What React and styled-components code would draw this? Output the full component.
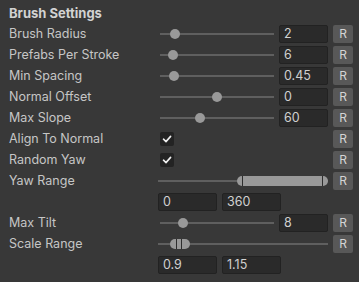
import React from "react";
import styled, { createGlobalStyle } from "styled-components";

const Global = createGlobalStyle`
  html, body { margin: 0; padding: 0; background: #383838; }
  body { font-family: Inter, "Noto Sans", "Liberation Sans", sans-serif; }
`;

const Panel = styled.div`
  width: 359px;
  height: 282px;
  box-sizing: border-box;
  padding: 3px 0 0 9px;
  background: #383838;
  color: #c6c6c6;
  font-size: 12.5px;
  display: flex;
  flex-direction: column;
`;

const Title = styled.div`
  height: 20px;
  line-height: 20px;
  font-weight: 700;
  font-size: 13px;
  color: #d2d2d2;
`;

const Row = styled.div`
  height: 21px;
  display: flex;
  align-items: center;
`;

const Label = styled.div`
  width: 149px;
  flex: none;
  white-space: nowrap;
`;

const Control = styled.div`
  width: 170px;
  flex: none;
  display: flex;
  align-items: center;
  gap: 5px;
`;

const SliderBox = styled.div`
  position: relative;
  width: ${(p) => p.$w}px;
  margin-left: ${(p) => p.$ml || 0}px;
  height: 14px;
  flex: none;
`;

const Track = styled.div`
  position: absolute;
  left: 0;
  right: 0;
  top: 6px;
  height: 2px;
  background: #5f5f5f;
`;

const Thumb = styled.div`
  position: absolute;
  top: 2px;
  width: 10px;
  height: 10px;
  margin-left: -5px;
  border-radius: 50%;
  background: #999999;
`;

const RangeFill = styled.div`
  position: absolute;
  top: 2px;
  height: 10px;
  border-radius: 5px;
  background: #999999;
`;

const Tick = styled.div`
  position: absolute;
  top: 2px;
  width: 1px;
  height: 10px;
  background: #2e2e2e;
`;

const Field = styled.div`
  width: ${(p) => p.$w}px;
  height: 18px;
  box-sizing: border-box;
  flex: none;
  background: #2a2a2a;
  border: 1px solid #222;
  border-radius: 2px;
  padding-left: 4px;
  line-height: 16px;
  color: #d0d0d0;
  font-size: 12.5px;
`;

const RButton = styled.div`
  width: 20px;
  height: 18px;
  margin-left: 5px;
  flex: none;
  border-radius: 2px;
  background: #585858;
  color: #d4d4d4;
  font-size: 12px;
  text-align: center;
  line-height: 18px;
`;

const Check = styled.div`
  width: 14px;
  height: 14px;
  margin-left: 2px;
  border-radius: 2px;
  background: #232323;
  display: flex;
  align-items: center;
  justify-content: center;
`;

const Slider = ({ pos }) => (
  <SliderBox $w={114} $ml={2}>
    <Track />
    <Thumb style={{ left: pos }} />
  </SliderBox>
);

const SliderRow = ({ label, pos, value }) => (
  <Row>
    <Label>{label}</Label>
    <Control>
      <Slider pos={pos} />
      <Field $w={49}>{value}</Field>
    </Control>
    <RButton>R</RButton>
  </Row>
);

const CheckRow = ({ label }) => (
  <Row>
    <Label>{label}</Label>
    <Control>
      <Check>
        <svg width="10" height="10" viewBox="0 0 10 10">
          <path d="M1.5 5.2 L4 7.6 L8.6 2.4" fill="none" stroke="#f0f0f0" strokeWidth="1.6" strokeLinecap="round" strokeLinejoin="round" />
        </svg>
      </Check>
    </Control>
    <RButton>R</RButton>
  </Row>
);

const RangeRow = ({ label, from, to, ticks }) => (
  <Row>
    <Label>{label}</Label>
    <Control>
      <SliderBox $w={170}>
        <Track />
        <RangeFill style={{ left: from, width: to - from }} />
        {ticks.map((t) => (
          <Tick key={t} style={{ left: t }} />
        ))}
      </SliderBox>
    </Control>
    <RButton>R</RButton>
  </Row>
);

const PairRow = ({ a, b }) => (
  <Row>
    <Label />
    <Control>
      <Field $w={59}>{a}</Field>
      <Field $w={59}>{b}</Field>
    </Control>
  </Row>
);

export default function App() {
  return (
    <>
      <Global />
      <Panel>
        <Title>Brush Settings</Title>
        <SliderRow label="Brush Radius" pos={15} value="2" />
        <SliderRow label="Prefabs Per Stroke" pos={13} value="6" />
        <SliderRow label="Min Spacing" pos={14} value="0.45" />
        <SliderRow label="Normal Offset" pos={57} value="0" />
        <SliderRow label="Max Slope" pos={40} value="60" />
        <CheckRow label="Align To Normal" />
        <CheckRow label="Random Yaw" />
        <RangeRow label="Yaw Range" from={79} to={170} ticks={[84, 164]} />
        <PairRow a="0" b="360" />
        <SliderRow label="Max Tilt" pos={23} value="8" />
        <RangeRow label="Scale Range" from={12} to={32} ticks={[18, 23]} />
        <PairRow a="0.9" b="1.15" />
      </Panel>
    </>
  );
}
